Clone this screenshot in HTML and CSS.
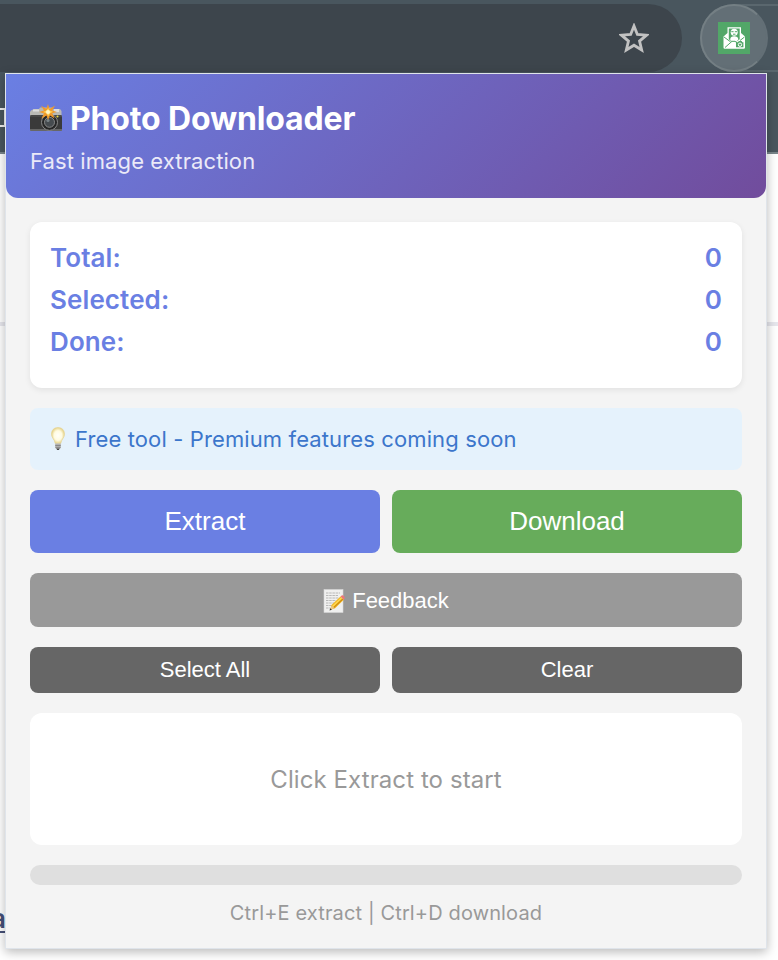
FILE: index.html
```html
<!DOCTYPE html>
<html lang="en">
<head>
<meta charset="UTF-8" />
<title>Photo Downloader</title>
<meta name="viewport" content="width=device-width,initial-scale=1" />
<link rel="stylesheet" href="styles.css">
</head>
<body>
<div class="browser">
  <div class="toolbar">
    <div class="omnibox">
      <svg class="star" width="30" height="30" viewBox="0 0 32 32">
        <path d="M16 3.200l3.600 9 9.700.8-7.400 6.300 2.300 9.400-8.200-5-8.200 5 2.300-9.400L2.700 13l9.700-.8z" fill="none" stroke="#c2c2c2" stroke-width="3"/>
      </svg>
    </div>
    <div class="extensions">
      <div class="ext-btn">
        <svg width="32" height="32" viewBox="0 0 32 32">
          <rect width="32" height="32" fill="#52a768"/>
          <path d="M5.500 14.500L9.500 11V5.200h13.500V11l4 3.500V25.500q0 1.300-1.300 1.300H6.800q-1.300 0-1.300-1.300z" fill="#fff"/>
          <path d="M10.800 6.500h10.900v10.800l-3 2.200h-5l-2.900-2.200z" fill="#52a768"/>
          <circle cx="16.200" cy="10.300" r="3.500" fill="#fff"/>
          <path d="M12.200 17.800c0-2.700 1.700-3.500 4-3.500s4.100.8 4.100 3.500l-2 1.700h-4z" fill="#fff"/>
          <path d="M13.300 9.700h2.300m1.200 0h2.300M15 12.200h2.500" stroke="#52a768" stroke-width="1"/>
          <path d="M6 15l6.500 4.800M26.500 15l-4.500 3.500M7 25.500l7-6.200h3l2 1.500" fill="none" stroke="#52a768" stroke-width="1"/>
          <path d="M18 20.300h2l.8-1.200h2.800l.8 1.200h1v5H18z" fill="#52a768"/>
          <circle cx="22" cy="22.700" r="1.700" fill="none" stroke="#fff" stroke-width="1"/>
        </svg>
      </div>
    </div>
  </div>
  <div class="bookmarks"><span class="bookmark"></span></div>
</div>
<div class="page">
  <div class="divider"></div>
  <a class="page-link">a</a>
</div>

<div class="popup">
  <div class="header">
    <h1>
      <svg class="emoji-camera" width="32" height="28" viewBox="0 0 32 28">
        <path d="M1 6.500L4 5h5l1-1.500h12L23 5h7l1.500 2V13H0V8z" fill="#b9b9b5"/>
        <path d="M3 5.500h6v2H3zM24 5h5v3h-5z" fill="#ddd"/>
        <rect y="11" width="32" height="16" rx="1.500" fill="#3a3a3a"/>
        <path d="M0 12h32" stroke="#555"/>
        <path d="M0 26h32" stroke="#777" stroke-width="1.500"/>
        <circle cx="19.500" cy="18.300" r="8" fill="#262626" stroke="#888"/>
        <circle cx="19.500" cy="18.300" r="5" fill="#464b4f" stroke="#888"/>
        <circle cx="18" cy="16.500" r="1.600" fill="#788286"/>
        <path d="M18 0l1.500 5L25 1.500l-2.700 5L27 8l-4.800 1.300 2.500 5.200-4.700-3L18 16l-1.500-4.600-5.300 3.300 2.800-5.200L9 8l5-1.400-3-4.800 5.300 3z" fill="#f09a2c"/>
        <path d="M18.200 4l1.300 2.500L23 7.800l-3 1.500-1.800 3-1.700-3-3.500-1.300 3.500-1.500z" fill="#ffd45c"/>
        <circle cx="18" cy="8" r="2" fill="#fff5c6"/>
        <circle cx="27.500" cy="12.500" r="1" fill="#f1dc43"/>
      </svg>
      <span>Photo Downloader</span>
    </h1>
    <p>Fast image extraction</p>
  </div>

  <div class="content">
    <div class="stats">
      <div class="stat"><span>Total:</span><span>0</span></div>
      <div class="stat"><span>Selected:</span><span>0</span></div>
      <div class="stat"><span>Done:</span><span>0</span></div>
    </div>

    <div class="notice">
      <svg width="14" height="24" viewBox="0 0 14 24">
        <defs>
          <radialGradient id="bulb">
            <stop offset="0" stop-color="#fffffa"/>
            <stop offset=".6" stop-color="#fffbe0"/>
            <stop offset="1" stop-color="#e6d38a"/>
          </radialGradient>
        </defs>
        <path d="M7 .5C3 .5.500 3.300.500 7c0 4 3.200 5.300 3.700 9.500h5.600C10.300 12.300 13.500 11 13.500 7 13.500 3.300 11 .5 7 .5z" fill="url(#bulb)" stroke="#e5d597" stroke-width=".7"/>
        <path d="M4.200 16.500h5.600v4.500L8.500 22h-3l-1.300-1z" fill="#b8b8b8"/>
        <path d="M4.200 18.400h5.600M4.400 20.300h5.200" stroke="#777" stroke-width=".8"/>
        <path d="M5.200 21.500h3.600L7.800 23H6.200z" fill="#444"/>
      </svg>
      <span>Free tool - Premium features coming soon</span>
    </div>

    <div class="row">
      <button class="btn btn-extract"><span>Extract</span></button>
      <button class="btn btn-download"><span>Download</span></button>
    </div>

    <button class="btn btn-feedback">
      <svg width="22" height="24" viewBox="0 0 22 24">
        <rect x="1" y=".5" width="19" height="23" fill="#f0f0ef" stroke="#d8d8d8" stroke-width=".6"/>
        <path d="M3 4h14M3 6.500h12M3 9h13M3 11.500h10M3 14h8M3 16.500h6M3 19h4" stroke="#aaa" stroke-width=".8" stroke-dasharray="2.500 .7"/>
        <path d="M7 21l1.500-5L17.500 7.500l3.300 3.300L12 19.300z" fill="#f2b51e"/>
        <path d="M9.500 17.500l9-8.500" stroke="#ffda55" stroke-width="1.200"/>
        <path d="M10.800 18.500l9-8.500" stroke="#bd7b11"/>
        <path d="M17.500 7.500l1.200-1c1.200-.8 3.600 1.500 2.900 2.900l-.8 1.400z" fill="#eb7879"/>
        <path d="M7 21l1.500-4.500 3 2.800z" fill="#e7c58b"/>
        <path d="M6.500 21.500l.8-2.200 1.500 1.500z" fill="#333"/>
      </svg>
      <span>Feedback</span>
    </button>

    <div class="row">
      <button class="btn btn-small"><span>Select All</span></button>
      <button class="btn btn-small"><span>Clear</span></button>
    </div>

    <div class="results"><span>Click Extract to start</span></div>
    <div class="progress"></div>
    <div class="shortcuts"><span>Ctrl+E extract | Ctrl+D download</span></div>
  </div>
</div>
</body>
</html>
```
FILE: styles.css
```css
:root {
  --accent: #6a7fe3;
  --green: #67ac5b;
  --bg: #f4f4f4;
  --chrome: #49565e;
}
* {
  box-sizing: border-box;
}
html, body {
  height: 100%;
  margin: 0;
  overflow: hidden;
  background: #fff;
  font-family: Inter, 'Liberation Sans', sans-serif;
}
svg {
  display: block;
  flex: none;
}

/* Browser behind the popup */
.browser {
  height: 154px;
  background: var(--chrome);
  border-bottom: 2px solid #79858a;
}
.toolbar {
  display: flex;
  gap: 18px;
  padding-top: 4px;
}
.omnibox {
  width: 682px;
  height: 68px;
  background: #3d454c;
  border-radius: 0 34px 34px 0;
  display: flex;
  align-items: center;
  justify-content: flex-end;
  padding-right: 33px;
}
.extensions {
  flex: 1;
  height: 68px;
  border: 2px solid #5a676e;
  border-right: none;
  border-radius: 34px 0 0 34px;
}
.ext-btn {
  width: 68px;
  height: 68px;
  margin: -2px;
  border-radius: 50%;
  background: #636f76;
  border: 2px solid #747f84;
  border-right-color: #636f76;
  display: flex;
  align-items: center;
  justify-content: center;
}
.bookmarks {
  padding-top: 36px;
}
.bookmark {
  display: block;
  width: 10px;
  height: 19px;
  margin-left: -4px;
  border: 2px solid #eee;
}
.page {
  display: flex;
  flex-direction: column;
  padding-top: 168px;
}
.divider {
  height: 4px;
  background: #e7e7ed;
}
.page-link {
  align-self: flex-start;
  margin: 577px 0 0 -9px;
  font-size: 26px;
  font-weight: 600;
  line-height: 32px;
  color: #465078;
  text-decoration: underline 2px;
  text-underline-offset: 3px;
}

/* Popup */
.popup {
  position: absolute;
  left: 5px;
  top: 73px;
  width: 762px;
  height: 876px;
  background: var(--bg);
  border: 1px solid #dfe4ea;
  box-shadow: 0 3px 10px rgba(0,0,0,0.28);
}
.header {
  height: 124px;
  padding: 23px 24px;
  color: #fff;
  background: linear-gradient(135deg, #6a7fe3 0%, #714c9c 100%);
  border-radius: 0 0 12px 12px;
}
.header h1 {
  display: flex;
  align-items: center;
  gap: 8px;
  height: 42px;
  margin: 0;
  font-size: 32px;
  font-weight: 700;
  letter-spacing: -0.15px;
}
.header p {
  margin: 9px 0 0;
  font-size: 22px;
  line-height: 26px;
  letter-spacing: 0.1px;
  color: #ebeaf8;
}
.content {
  display: flex;
  flex-direction: column;
  gap: 20px;
  padding: 24px;
}
.stats {
  padding: 20px;
  height: 166px;
  background: #fff;
  border-radius: 12px;
  box-shadow: 0 2px 6px rgba(0,0,0,0.08);
}
.stat {
  display: flex;
  justify-content: space-between;
  margin-bottom: 10px;
  font-size: 26px;
  font-weight: 600;
  line-height: 32px;
  letter-spacing: 0.1px;
  color: var(--accent);
}
.notice {
  display: flex;
  align-items: center;
  gap: 10px;
  height: 62px;
  padding: 0 20px 0 21px;
  border-radius: 8px;
  background: #e5f2fc;
  color: #3c76cb;
  font-size: 22px;
  letter-spacing: 0.12px;
}
.row {
  display: flex;
  gap: 12px;
}
.btn {
  flex: 1;
  display: flex;
  align-items: center;
  justify-content: center;
  gap: 7px;
  padding: 0;
  border: none;
  border-radius: 8px;
  color: #fff;
  font-family: 'Liberation Sans', Arial, sans-serif;
  font-size: 22px;
}
.btn-extract, .btn-download {
  height: 63px;
  font-size: 26px;
}
.btn-extract {
  background: var(--accent);
}
.btn-download {
  background: var(--green);
}
.btn-feedback {
  flex: none;
  height: 54px;
  padding-top: 1px;
  background: #999;
}
.btn-small {
  height: 46px;
  background: #666;
}
.results {
  display: flex;
  align-items: center;
  justify-content: center;
  height: 132px;
  background: #fff;
  border-radius: 12px;
  color: #999;
  font-size: 24px;
  letter-spacing: 0.08px;
}
.progress {
  height: 20px;
  border-radius: 10px;
  background: #dfdfdf;
}
.shortcuts {
  margin-top: -4px;
  text-align: center;
  font-size: 20px;
  line-height: 24px;
  letter-spacing: 0.13px;
  color: #999;
}
```
